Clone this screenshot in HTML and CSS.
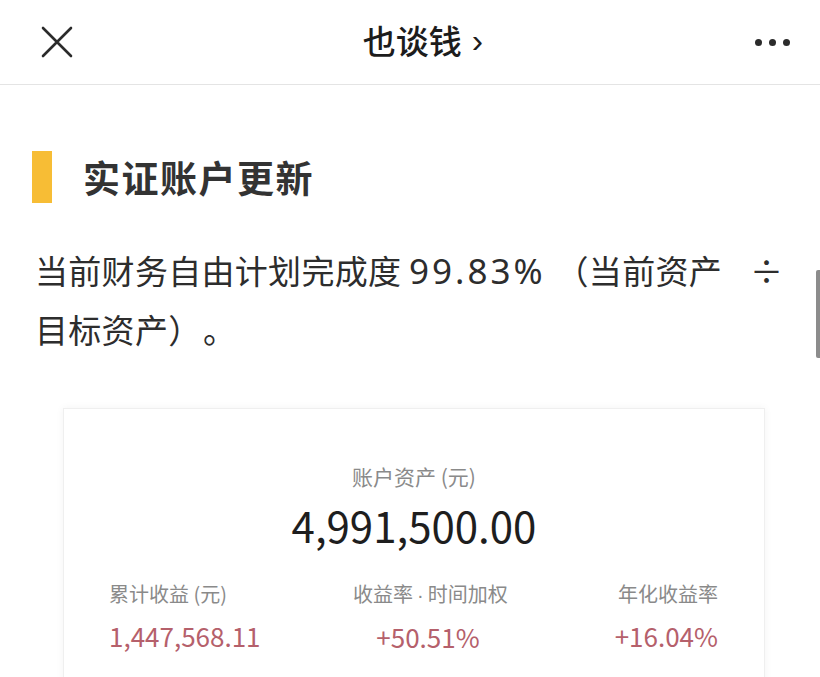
FILE: index.html
```html
<!DOCTYPE html>
<html lang="zh-CN">
<head>
<meta charset="utf-8">
<title>也谈钱</title>
<link rel="stylesheet" href="styles.css">
</head>
<body>
<header class="topbar">
  <svg class="close" width="32" height="32" viewBox="0 0 32 32"><path d="M2 2 L30 30 M30 2 L2 30" stroke="#2b2b2b" stroke-width="2.6" stroke-linecap="round" fill="none"/></svg>
  <div class="title">也谈钱<span class="chev">›</span></div>
  <div class="more"><i></i><i></i><i></i></div>
</header>
<main class="article">
  <h2 class="section-title"><span class="bar"></span><span>实证账户更新</span></h2>
  <p class="para"><span class="line">当前财务自由计划完成度 <span class="num">99.83%</span><span class="paren">（当前资产</span><span class="div">÷</span></span><br>目标资产<span class="rparen">）</span>。</p>
  <div class="card">
    <div class="card-label">账户资产 (元)</div>
    <div class="card-total">4,991,500.00</div>
    <div class="stats">
      <div class="stat left">
        <div class="stat-label">累计收益 (元)</div>
        <div class="stat-value">1,447,568.11</div>
      </div>
      <div class="stat mid">
        <div class="stat-label">收益率<span class="dot">·</span>时间加权</div>
        <div class="stat-value">+50.51%</div>
      </div>
      <div class="stat right">
        <div class="stat-label">年化收益率</div>
        <div class="stat-value">+16.04%</div>
      </div>
    </div>
  </div>
</main>
<div class="scrollbar"></div>
</body>
</html>
```
FILE: styles.css
```css
html, body {
  margin: 0;
  padding: 0;
  background: #ffffff;
  width: 820px;
  height: 677px;
  overflow: hidden;
  font-family: "Noto Sans CJK SC", "Noto Sans", sans-serif;
  color: #222;
}
.topbar {
  height: 85px;
  border-bottom: 1px solid #e4e4e4;
  display: flex;
  align-items: center;
  justify-content: space-between;
  padding: 0 30px 0 41px;
  box-sizing: border-box;
}
.close { display: block; width: 32px; height: 32px; }
.title {
  font-size: 33px;
  font-weight: 500;
  color: #1c1c1c;
  margin-left: 18px;
  margin-top: -4px;
}
.chev {
  font-family: "Liberation Sans", sans-serif;
  font-weight: 400;
  font-size: 34px;
  margin-left: 10px;
  position: relative;
  top: -2px;
}
.more { display: flex; gap: 7px; margin-top: 1px; }
.more i {
  display: block;
  width: 7px; height: 7px;
  border-radius: 50%;
  background: #2b2b2b;
}
.article { padding: 66px 35px 0 32px; }
.section-title {
  margin: 0;
  display: flex;
  align-items: center;
  gap: 31px;
  font-size: 37px;
  font-weight: 700;
  color: #333;
  height: 52px;
  letter-spacing: 1.5px;
}
.bar {
  width: 20px; height: 52px;
  background: #f7bd35;
  display: block;
}
.para {
  margin: 38px 0 0 3px;
  font-size: 33px;
  line-height: 58px;
  color: #2d2d2d;
  letter-spacing: 0.3px;
}
.line { white-space: nowrap; }
.num {
  font-family: "Noto Sans", sans-serif;
  font-size: 35px;
  letter-spacing: 3px;
}
.paren { margin-left: 10px; }
.div { margin-left: 28px; }
.rparen { margin-right: 18px; }
.card {
  margin: 50px 20px 0 31px;
  border: 1px solid #efefef;
  box-shadow: 0 0 8px rgba(0,0,0,0.05);
  height: 300px;
  padding-top: 52px;
  box-sizing: border-box;
}
.card-label {
  text-align: center;
  font-size: 21px;
  color: #8a8a8a;
  line-height: 30px;
}
.card-total {
  text-align: center;
  font-size: 42px;
  font-weight: 400;
  color: #1e1e1e;
  line-height: 54px;
  margin-top: 7px;
}
.stats {
  display: flex;
  padding: 0 46px 0 45px;
  margin-top: 27px;
}
.stat.left { width: 244px; }
.stat.mid { width: 150px; text-align: center; }
.stat.right { margin-left: auto; text-align: right; }
.stat-label {
  font-size: 20px;
  color: #8a8a8a;
  line-height: 30px;
  white-space: nowrap;
}
.dot {
  font-family: "Liberation Sans", sans-serif;
  margin: 0 4px;
}
.stat-value {
  font-size: 26px;
  color: #b5606b;
  line-height: 36px;
  margin-top: 9px;
}
.scrollbar {
  position: absolute;
  right: 0;
  top: 270px;
  width: 4px;
  height: 88px;
  background: #8c8c8c;
  border-radius: 2px 0 0 2px;
}
```
